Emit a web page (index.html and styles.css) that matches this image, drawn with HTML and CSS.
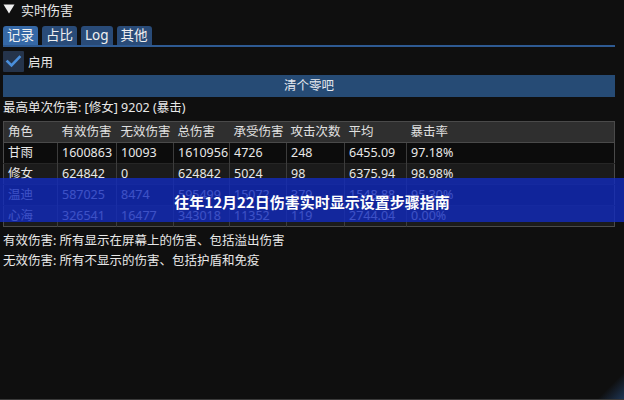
FILE: index.html
```html
<!DOCTYPE html>
<html lang="zh">
<head>
<meta charset="utf-8">
<link rel="stylesheet" href="styles.css">
</head>
<body>
<div class="app">
  <div class="title">
    <svg class="arrow" width="12" height="10" viewBox="0 0 12 10"><polygon points="0.5,0.5 11.5,0.5 6,9.5" fill="#f0f0f0"/></svg>
    <span>实时伤害</span>
  </div>
  <div class="tabs">
    <div class="tab active">记录</div>
    <div class="tab">占比</div>
    <div class="tab">Log</div>
    <div class="tab">其他</div>
  </div>
  <div class="check-row">
    <div class="checkbox">
      <svg width="21" height="21" viewBox="0 0 21 21"><path d="M4.5 10.5 L8.5 14.5 L16.5 6" fill="none" stroke="#4a8fdc" stroke-width="2.6" stroke-linecap="square"/></svg>
    </div>
    <span>启用</span>
  </div>
  <div class="button">清个零吧</div>
  <div class="info">最高单次伤害: [修女] 9202 (暴击)</div>
  <div class="table-wrap">
    <table class="stats">
      <colgroup>
        <col class="c1"><col class="c2"><col class="c3"><col class="c4"><col class="c5"><col class="c6"><col class="c7"><col class="c8">
      </colgroup>
      <thead>
        <tr><th>角色</th><th>有效伤害</th><th>无效伤害</th><th>总伤害</th><th>承受伤害</th><th>攻击次数</th><th>平均</th><th>暴击率</th></tr>
      </thead>
      <tbody>
        <tr><td>甘雨</td><td>1600863</td><td>10093</td><td>1610956</td><td>4726</td><td>248</td><td>6455.09</td><td>97.18%</td></tr>
        <tr><td>修女</td><td>624842</td><td>0</td><td>624842</td><td>5024</td><td>98</td><td>6375.94</td><td>98.98%</td></tr>
        <tr><td>温迪</td><td>587025</td><td>8474</td><td>595499</td><td>15072</td><td>379</td><td>1548.88</td><td>95.30%</td></tr>
        <tr><td>心海</td><td>326541</td><td>16477</td><td>343018</td><td>11352</td><td>119</td><td>2744.04</td><td>0.00%</td></tr>
      </tbody>
    </table>
    <div class="banner">往年12月22日伤害实时显示设置步骤指南</div>
  </div>
  <div class="notes">
    <div>有效伤害: 所有显示在屏幕上的伤害、包括溢出伤害</div>
    <div>无效伤害: 所有不显示的伤害、包括护盾和免疫</div>
  </div>
  <div class="corner"></div>
</div>
</body>
</html>
```
FILE: styles.css
```css
html, body {
  margin: 0;
  padding: 0;
  background: #0f0f0f;
}
body {
  width: 624px;
  height: 400px;
  overflow: hidden;
  font-family: "Noto Sans", "Noto Sans CJK SC", sans-serif;
  font-size: 12.5px;
  color: #e8e8e8;
}
.app {
  position: relative;
  height: 400px;
  padding: 0 9px 0 3px;
  box-sizing: border-box;
  border-bottom: 1px solid #3a3a3a;
}
.title {
  height: 18px;
  display: flex;
  align-items: center;
  gap: 6px;
  font-size: 13px;
}
.arrow { display: block; }
.tabs {
  margin-top: 8px;
  display: flex;
  gap: 4px;
  border-bottom: 2px solid #2e5a92;
}
.tab {
  height: 19px;
  line-height: 19px;
  padding: 0 4px;
  background: #294b78;
  border-radius: 3px 3px 0 0;
  font-size: 13.5px;
  color: #f0f0f0;
}
.tab.active { background: #3568a6; }
.check-row {
  margin-top: 3px;
  height: 22px;
  display: flex;
  align-items: center;
  gap: 4px;
  font-size: 12.5px;
}
.checkbox {
  width: 21px;
  height: 21px;
  background: #25344b;
  border-radius: 1px;
}
.checkbox svg { display: block; }
.button {
  margin-top: 3px;
  height: 22px;
  line-height: 22px;
  background: #264b75;
  text-align: center;
  color: #e4e8ee;
}
.info {
  height: 22px;
  line-height: 22px;
}
.table-wrap {
  position: relative;
  margin-top: 2px;
}
.stats {
  width: 100%;
  border-collapse: collapse;
  table-layout: fixed;
  border: 1px solid #4a4a4a;
}
.c1 { width: 54px; }
.c2 { width: 59px; }
.c3 { width: 57px; }
.c4 { width: 56px; }
.c5 { width: 57px; }
.c6 { width: 58px; }
.c7 { width: 62px; }
.c8 { width: auto; }
.stats th, .stats td {
  height: 20px;
  padding: 0 4px;
  text-align: left;
  font-weight: normal;
  white-space: nowrap;
  overflow: hidden;
  line-height: 20px;
}
.stats th {
  background: #2f2f2f;
  color: #e0e0e0;
  border-bottom: 1px solid #4a4a4a;
}
.stats td {
  border-left: 1px solid #3c3c3c;
  border-top: 1px solid #262626;
}
.stats td:first-child { border-left: none; }
.stats tbody tr:nth-child(odd) td { background: #0c0c0c; }
.stats tbody tr:nth-child(even) td { background: #1b1b1b; }
.banner {
  position: absolute;
  left: -3px;
  right: -9px;
  top: 57px;
  height: 44px;
  background: rgba(18, 42, 190, 0.8);
  color: #ffffff;
  font-family: "Noto Sans CJK SC", sans-serif;
  font-weight: 700;
  font-size: 15px;
  display: flex;
  align-items: center;
  justify-content: center;
  padding-top: 2px;
  box-sizing: border-box;
}
.notes {
  margin-top: 4px;
  line-height: 20px;
}
.corner {
  position: absolute;
  right: 0;
  bottom: 0;
  width: 30px;
  height: 30px;
  background: linear-gradient(135deg, transparent 55%, #1e3555 100%);
}
```
